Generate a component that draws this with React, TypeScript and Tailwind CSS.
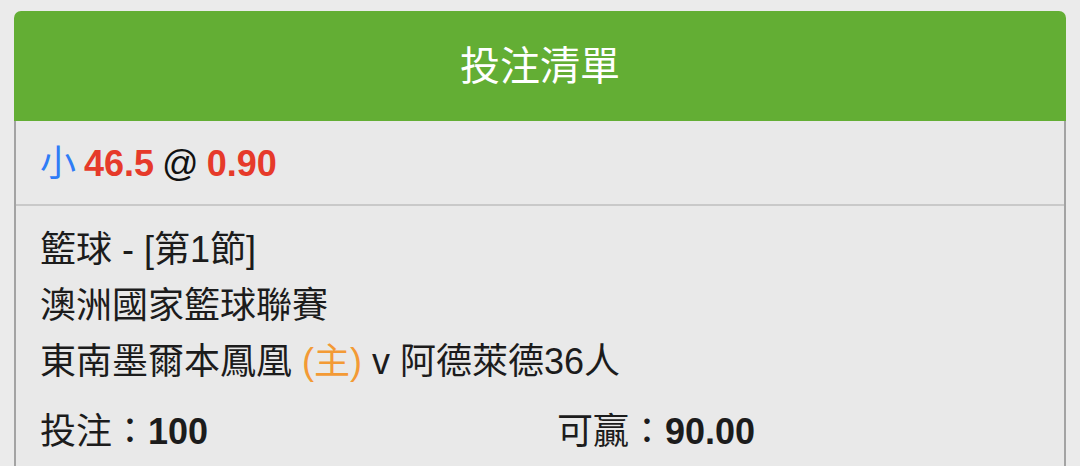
import React from "react";

const font = { fontFamily: '"Liberation Sans", "Noto Sans CJK TC", sans-serif' };

export default function App() {
  return (
    <div className="w-[1080px] h-[466px] overflow-hidden bg-[#ebebeb] pt-[11px] px-[14px]" style={font}>
      <div className="w-[1052px] rounded-t-[7px] overflow-hidden">
        <div className="h-[110px] bg-[#63ae34] flex items-center justify-center">
          <span className="text-white text-[40px] leading-none">投注清單</span>
        </div>
        <div className="border-x-[2px] border-[#a3a3a3] bg-[#e9e9e9] pb-[40px]">
          <div className="h-[85px] flex items-center pt-[2px] px-[24px] text-[36px] leading-none border-b-[2px] border-[#c9c9c9]">
            <span className="text-[#2f7cf6]">小</span>
            <span className="ml-[8px] font-bold text-[#e63a2a]">46.5</span>
            <span className="ml-[8px] text-[#111]">@</span>
            <span className="ml-[8px] font-bold text-[#e63a2a]">0.90</span>
          </div>
          <div className="px-[24px] pt-[16px] text-[36px] leading-[56px] text-[#1c1c1c]">
            <div>籃球 - [第1節]</div>
            <div>澳洲國家籃球聯賽</div>
            <div>
              東南墨爾本鳳凰 <span className="text-[#f39a35]">(主)</span> v 阿德萊德36人
            </div>
            <div className="mt-[14px] grid grid-cols-[517px_1fr]">
              <div>
                投注：<span className="font-bold">100</span>
              </div>
              <div>
                可贏：<span className="font-bold">90.00</span>
              </div>
            </div>
          </div>
        </div>
      </div>
    </div>
  );
}
